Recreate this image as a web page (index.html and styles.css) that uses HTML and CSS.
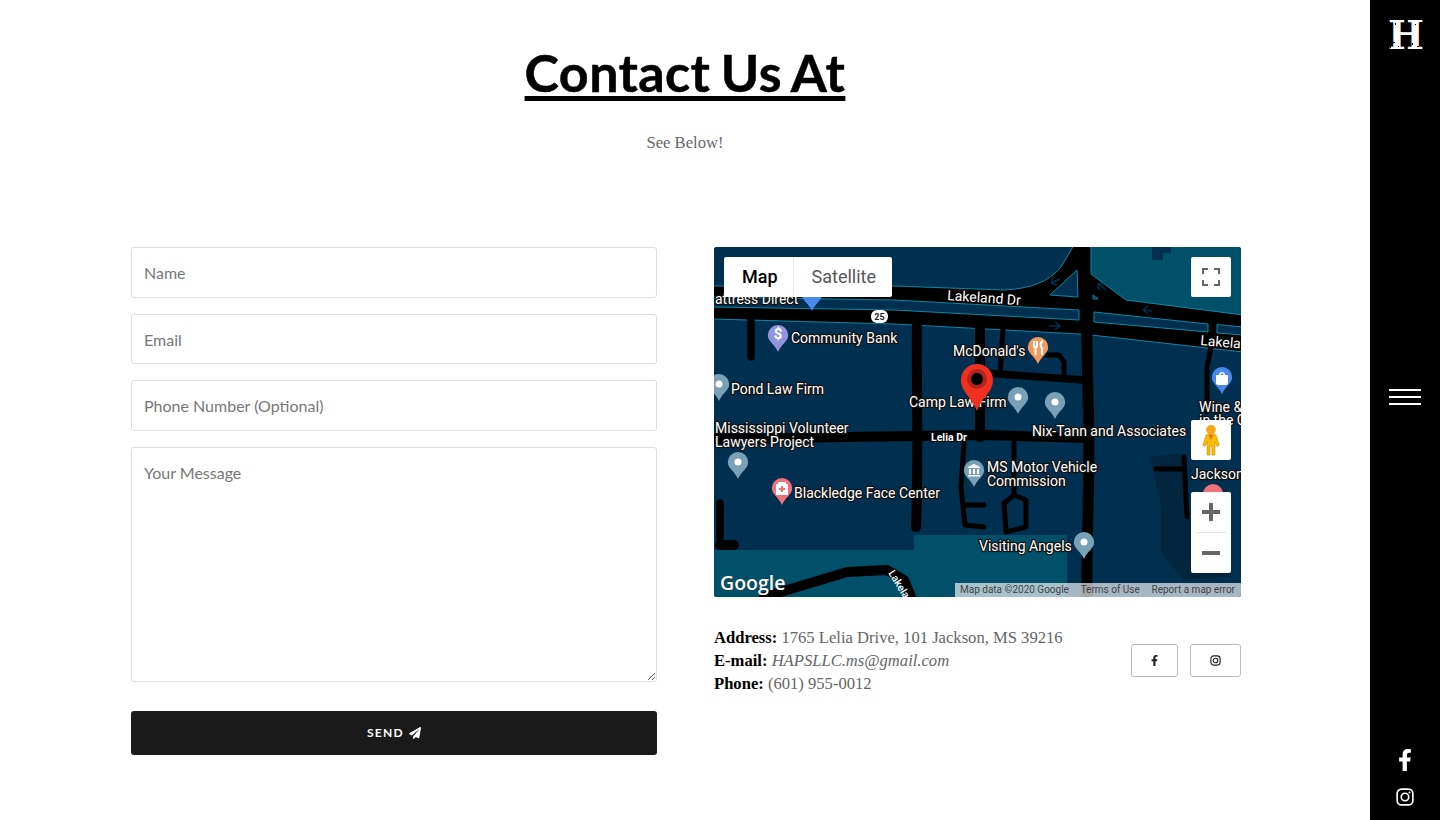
FILE: index.html
```html
<!DOCTYPE html>
<html lang="en">
<head>
<meta charset="utf-8">
<title>Contact Us</title>
<link rel="stylesheet" href="styles.css">
</head>
<body>
<div class="page">
  <main class="main">
    <header class="head">
      <h1 class="title">Contact Us At</h1>
      <p class="sub">See Below!</p>
    </header>
    <div class="columns">
      <form class="form">
        <input class="field" type="text" placeholder="Name">
        <input class="field field-low" type="text" placeholder="Email">
        <input class="field" type="text" placeholder="Phone Number (Optional)">
        <textarea class="field area" placeholder="Your Message"></textarea>
        <button class="send" type="button">SEND
          <svg class="plane" viewBox="0 0 512 512"><path d="M476 3.2L12.5 270.6c-18.1 10.4-15.8 35.6 2.2 43.2L121 358.4l287.3-253.2c5.500-4.900 13.300 2.600 8.600 8.300L176 407v80.500c0 23.600 28.500 32.900 42.500 15.800L282 426l124.600 52.200c14.200 6 30.400-2.900 33-18.200l72-432C515 7.800 493.300-6.800 476 3.200z"/></svg>
        </button>
      </form>
      <section class="right">
        <div class="map">
          <svg class="map-art" viewBox="0 0 527 350">
            <defs>
              <path id="pin" d="M0-17a10.200 10.200 0 0 1 10.200 10.200c0 6.300-7.300 9.300-10.200 16.800c-2.900-7.500-10.200-10.500-10.200-16.800a10.200 10.200 0 0 1 10.200-10.200z"/>
            </defs>
            <rect class="water" width="527" height="350"/>
            <path class="teal" d="M377 0V27L412 53L527 68V0Z"/>
            <path class="water" d="M438 0h19v6h-8v7h-11z"/>
            <path class="teal" d="M0 303H200V288H353V350H0Z"/>
            <path class="shade" d="M435 210L470 206L473 260L517 316V330L470 333L447 306V256Z"/>

            <path class="highway" d="M-2 39L180 39L290 43C315 42 335 35 347 20L360 -2H377V27L412 53L529 68V105L377 88L365 87L180 77L-2 72Z"/>
            <path class="island" d="M-2 50L180 53L365 63V73L180 63L-2 60Z"/>
            <path class="island" d="M363 23L336 48L364 50Z"/>
            <path class="island" d="M380 65L494 77V85L380 75Z"/>
            <path class="island" d="M503 77.500L529 80V88L503 86Z"/>
            <path class="island" d="M379 48L384 52H379Z"/>
            <path class="arrow" d="M346 79H335M341 75L346 79L341 83"/>
            <path class="arrow" d="M337 36L346 32M337 36L339 30M337 36L343 38"/>
            <path class="arrow" d="M392 43L384 37M384 37L385 43M384 37L390 37"/>
            <path class="arrow" d="M438 64L429 63M429 63L434 59M429 63L434 67"/>

            <g class="st-big">
              <path d="M369 -5L372 50L373 100L374 150C377 220 372 290 373 350"/>
            </g>
            <g class="st-mid">
              <path d="M203 77C202 130 205 200 202 280"/>
              <path d="M0 192L130 190L270 188L373 191"/>
              <path d="M50 350L133 325L173 323L190 333L197 350"/>
              <path d="M6 298H20"/>
              <path d="M266 80V190"/>
            </g>
            <g class="st-thin">
              <path d="M37 73V110"/>
              <path d="M6 256V292"/>
              <path d="M270 126L370 133"/>
            </g>
            <g class="st-small">
              <path d="M289 82L286 127"/>
              <path d="M333 108H345L350 115V130"/>
              <path d="M498 95L493 120V165"/>
              <path d="M250 196L247 240L251 278L270 280"/>
              <path d="M250 258H270"/>
              <path d="M300 196V248"/>
              <path d="M290 256L300 248L312 253V280L292 285Z"/>
              <path d="M442 222H470M470 210L473 270"/>
            </g>

            <use class="p-blue" href="#pin" x="98" y="54"/>
            <use class="p-purple" href="#pin" x="64" y="95"/>
            <use class="p-grey" href="#pin" x="5" y="144"/>
            <use class="p-orange" href="#pin" x="324" y="107"/>
            <use class="p-grey" href="#pin" x="304" y="157"/>
            <use class="p-grey" href="#pin" x="341" y="162"/>
            <use class="p-blue" href="#pin" x="508" y="137"/>
            <use class="p-grey" href="#pin" x="24" y="222"/>
            <use class="p-rose" href="#pin" x="68" y="248"/>
            <use class="p-grey" href="#pin" x="260" y="230"/>
            <use class="p-grey" href="#pin" x="370" y="302"/>
            <use class="p-rose" href="#pin" x="499" y="254"/>

            <circle class="dot" cx="5" cy="137" r="3.500"/>
            <circle class="dot" cx="304" cy="150" r="3.500"/>
            <circle class="dot" cx="341" cy="155" r="3.500"/>
            <circle class="dot" cx="24" cy="215" r="3.500"/>
            <circle class="dot" cx="370" cy="295" r="3.500"/>

            <text class="glyph" x="64" y="92">$</text>
            <path class="icon-line" d="M320 94v5c0 2 3 2 3 0v-5M321.500 99v9M329 94c-3 1-3 6-1 7v7"/>
            <path class="dot" d="M502 128h12v8c0 1-1 2-2 2h-8c-1 0-2-1-2-2zM505 128c0-4 6-4 6 0h-1.500c0-2-3-2-3 0z"/>
            <path class="dot" d="M62 237h12v11h-12zM64 235h8v2h-8z"/>
            <path class="p-rose" d="M67 239h2v2h2v2h-2v2h-2v-2h-2v-2h2z"/>
            <path class="dot" d="M260 217l6 3v1h-12v-1zM255 222h2v5h-2zM259 222h2v5h-2zM263 222h2v5h-2zM254 228h12v1.500h-12z"/>

            <g class="road-label">
              <text x="233" y="53" transform="rotate(4 233 53)">Lakeland Dr</text>
              <text x="486" y="98" transform="rotate(5 486 98)">Lakela</text>
            </g>
            <g class="label">
              <text x="1" y="57">attress Direct</text>
              <text x="77" y="96">Community Bank</text>
              <text x="239" y="109">McDonald's</text>
              <text x="17" y="147">Pond Law Firm</text>
              <text x="195" y="160">Camp Law Firm</text>
              <text x="1" y="186">Mississippi Volunteer</text>
              <text x="1" y="200">Lawyers Project</text>
              <text x="318" y="189">Nix-Tann and Associates</text>
              <text x="485" y="165">Wine &amp;</text>
              <text x="485" y="178">in the C</text>
              <text x="273" y="225">MS Motor Vehicle</text>
              <text x="273" y="239">Commission</text>
              <text x="80" y="251">Blackledge Face Center</text>
              <text x="477" y="232">Jackson</text>
              <text x="265" y="304">Visiting Angels</text>
            </g>
            <text class="small-road" x="217" y="194">Lelia Dr</text>
            <text class="small-curve" x="174" y="326" transform="rotate(58 174 326)">Lakela</text>
            <rect class="shield" x="157" y="63" width="17" height="13" rx="6"/>
            <text class="shield-text" x="165.500" y="73">25</text>

            <path class="m-main" d="M263 117C254 117 247 124 247 133C247 145 258 150 263 164C268 150 279 145 279 133C279 124 272 117 263 117Z"/>
            <circle class="m-ring" cx="263" cy="132" r="10"/>
            <circle class="m-dot" cx="263" cy="132" r="6"/>

            <text class="google" x="6" y="343">Google</text>
          </svg>

          <div class="map-type">
            <span class="mt mt-on">Map</span>
            <span class="mt">Satellite</span>
          </div>
          <button class="ctl full" type="button" aria-label="Fullscreen">
            <svg class="ctl-icon" viewBox="0 0 18 18"><path d="M0 6V0H6V2H2V6ZM12 0H18V6H16V2H12ZM18 12V18H12V16H16V12ZM6 18H0V12H2V16H6Z"/></svg>
          </button>
          <button class="ctl peg" type="button" aria-label="Street View">
            <svg class="peg-icon" viewBox="0 0 18 32">
              <circle class="peg-a" cx="9" cy="5" r="5"/>
              <path class="peg-b" d="M4 10H14L17.500 21L15 22L13 17V31H10V22H8V31H5V17L3 22L.5 21Z"/>
              <path class="peg-c" d="M6 10L9 15L12 10Z"/>
            </svg>
          </button>
          <div class="zoomer">
            <button class="zb" type="button" aria-label="Zoom in"><svg class="ctl-icon" viewBox="0 0 18 18"><path d="M7 0H11V7H18V11H11V18H7V11H0V7H7Z"/></svg></button>
            <span class="zsep"></span>
            <button class="zb" type="button" aria-label="Zoom out"><svg class="ctl-icon" viewBox="0 0 18 18"><path d="M0 7H18V11H0Z"/></svg></button>
          </div>
          <div class="attrib">
            <span>Map data ©2020 Google</span><span>Terms of Use</span><span>Report a map error</span>
          </div>
        </div>
        <div class="info">
          <div class="lines">
            <div><b class="key">Address:</b> 1765 Lelia Drive, 101 Jackson, MS 39216</div>
            <div><b class="key">E-mail:</b> <em>HAPSLLC.ms@gmail.com</em></div>
            <div><b class="key">Phone:</b> (601) 955-0012</div>
          </div>
          <div class="socials">
            <a class="soc soc-f" href="#" aria-label="Facebook"><svg class="soc-ic" viewBox="0 0 320 512"><path d="M279.140 288l14.220-92.660h-88.910v-60.130c0-25.350 12.420-50.060 52.240-50.060h40.420V6.260S260.430 0 225.360 0c-73.220 0-121.080 44.380-121.080 124.720v70.620H22.890V288h81.390v224h100.170V288z"/></svg></a>
            <a class="soc soc-i" href="#" aria-label="Instagram"><svg class="soc-ig" viewBox="0 0 24 24"><rect x="2" y="2" width="20" height="20" rx="6"/><circle cx="12" cy="12" r="5"/><circle class="soc-dot" cx="17.500" cy="6.500" r="1"/></svg></a>
          </div>
        </div>
      </section>
    </div>
  </main>
  <aside class="side">
    <svg class="logo" viewBox="0 0 40 34">
      <text class="logo-h" x="3" y="31" textLength="36" lengthAdjust="spacingAndGlyphs">H</text>
      <path class="logo-wear" d="M8 24h2v1h-2zM27 25h1v2h-1zM35 4h2v1h-2zM10 5h1v2h-1zM5 29h1v1h-1zM30 6h1v1h-1zM13 28h1v1h-1zM32 28h2v1h-2z"/>
    </svg>
    <button class="burger" type="button" aria-label="Menu"><span></span><span></span><span></span></button>
    <div class="side-soc">
      <svg class="side-f" viewBox="0 0 320 512"><path d="M279.140 288l14.220-92.660h-88.910v-60.130c0-25.350 12.420-50.060 52.240-50.060h40.420V6.260S260.430 0 225.360 0c-73.220 0-121.080 44.380-121.080 124.720v70.620H22.890V288h81.390v224h100.170V288z"/></svg>
      <svg class="side-i" viewBox="0 0 24 24"><rect x="1.500" y="1.500" width="21" height="21" rx="6"/><circle cx="12" cy="12" r="5"/><circle class="soc-dot" cx="18" cy="6" r="1.300"/></svg>
    </div>
  </aside>
</div>
</body>
</html>
```

FILE: styles.css
```css
* { box-sizing: border-box; }
html, body { margin: 0; height: 100%; background: #fff; }
body { font-family: "Liberation Serif", serif; overflow: hidden; }
.page { display: flex; height: 820px; }
.main { flex: 1; min-width: 0; display: flex; flex-direction: column; align-items: center; }
.head { text-align: center; padding-top: 40px; }
.title { margin: 0; font: 700 52px/64px Lato, sans-serif; color: #000; letter-spacing: .4px; word-spacing: -2.500px; -webkit-text-stroke: .5px #000; text-decoration: underline; text-decoration-thickness: 5px; text-underline-offset: 4px; }
.sub { margin: 27px 0 0; font-size: 16.600px; line-height: 24px; color: #666; }
.columns { display: flex; gap: 57px; width: 1110px; margin: 92px 0 0 2px; }
.form { width: 526px; display: flex; flex-direction: column; gap: 16px; flex: none; }
.field { display: block; width: 100%; height: 50.600px; border: 1px solid #ddd; border-radius: 3px; padding: 0 12px; font: 400 16px/24px Lato, sans-serif; color: #333; background: #fff; outline: none; }
.field-low { padding-top: 2px; }
.field::placeholder { color: #777; opacity: 1; }
.area { height: 235.200px; padding-top: 13px; resize: vertical; }
.send { height: 44px; margin-top: 13px; border: 0; border-radius: 3px; background: #1a1a1a; color: #fff; font: 700 12px/44px Lato, sans-serif; letter-spacing: 1.300px; display: flex; justify-content: center; align-items: center; gap: 5px; padding: 0; }
.plane { width: 12px; height: 12px; fill: #fff; }
.right { width: 527px; flex: none; }
.map { position: relative; width: 527px; height: 350px; border-radius: 3px; overflow: hidden; background: #012f50; }
.map-art { display: block; width: 527px; height: 350px; }
.water { fill: #012f50; }
.teal { fill: #00506a; }
.shade { fill: #03263f; }
.highway { fill: #000; stroke: #0c87a3; stroke-width: 1; }
.island { fill: #012f50; stroke: #0c87a3; stroke-width: 1; }
.arrow { fill: none; stroke: #012f50; stroke-width: 1.500; }
.st-big path, .st-mid path, .st-thin path, .st-small path { fill: none; stroke: #000; stroke-linecap: round; stroke-linejoin: round; }
.st-big path { stroke-width: 11; }
.st-mid path { stroke-width: 10; }
.st-thin path { stroke-width: 7.500; }
.st-small path { stroke-width: 5; }
.p-blue { fill: #4a89ec; }
.p-purple { fill: #9293dc; }
.p-grey { fill: #78a0b6; }
.p-orange { fill: #f19a5e; }
.p-rose { fill: #f0707c; }
.dot { fill: #fff; }
.glyph { fill: #fff; font: 700 15px Roboto, sans-serif; text-anchor: middle; }
.icon-line { fill: none; stroke: #fff; stroke-width: 2; }
.label text, .road-label text { font: 400 14px Roboto, sans-serif; fill: #fff; stroke: #111; stroke-width: 2.500px; paint-order: stroke; stroke-linejoin: round; }
.road-label text { stroke: #000; }
.small-road { font: 700 10.500px Roboto, sans-serif; fill: #fff; stroke: #000; stroke-width: 2px; paint-order: stroke; }
.small-curve { font: 500 10.500px Roboto, sans-serif; fill: #fff; }
.shield { fill: #fff; }
.shield-text { font: 700 9px Roboto, sans-serif; fill: #222; text-anchor: middle; }
.m-main { fill: #f0301f; }
.m-ring { fill: #b3231b; }
.m-dot { fill: #000; }
.google { font: 600 19.500px "Open Sans", sans-serif; fill: #fff; stroke: #222; stroke-width: .5px; paint-order: stroke; }
.map-type { position: absolute; left: 10px; top: 10px; display: flex; height: 40px; background: #fff; border-radius: 2px; font: 400 18px/40px Roboto, sans-serif; }
.mt { padding: 0 16px 0 18px; color: #565656; }
.mt-on { color: #000; font-weight: 500; border-right: 1px solid #e6e6e6; padding-right: 15px; }
.ctl { position: absolute; right: 10px; width: 40px; height: 40px; border: 0; padding: 0; background: #fff; border-radius: 2px; display: flex; align-items: center; justify-content: center; }
.full { top: 10px; }
.peg { top: 173px; }
.ctl-icon { width: 18px; height: 18px; fill: #666; }
.peg-icon { width: 18px; height: 31px; }
.peg-a { fill: #f6a814; }
.peg-b { fill: #fbbc04; stroke: #c98a00; stroke-width: .6; }
.peg-c { fill: #e37400; }
.zoomer { position: absolute; right: 10px; top: 245px; width: 40px; height: 81px; background: #fff; border-radius: 2px; display: flex; flex-direction: column; align-items: center; }
.zb { width: 40px; height: 40px; border: 0; padding: 0; background: none; display: flex; align-items: center; justify-content: center; }
.zsep { width: 30px; height: 1px; background: #e6e6e6; flex: none; }
.attrib { position: absolute; right: 0; bottom: 0; height: 14px; width: 286px; background: rgba(255,255,255,.65); font: 400 10px/14px Roboto, sans-serif; color: #444; display: flex; justify-content: space-between; padding: 0 6px 0 5px; }
.info { display: flex; justify-content: space-between; align-items: center; margin-top: 29px; }
.lines { font-size: 16.600px; line-height: 23px; color: #666; }
.key { color: #000; font-weight: 700; }
.socials { display: flex; gap: 12px; }
.soc { height: 33px; border: 1px solid #bbb; border-radius: 3px; display: flex; align-items: center; justify-content: center; background: #fff; }
.soc-f { width: 47px; }
.soc-i { width: 51px; }
.soc-ic { width: 7px; height: 11px; fill: #222; }
.soc-ig { width: 11px; height: 11px; fill: none; stroke: #222; stroke-width: 2.400; }
.soc-dot { fill: #fff; stroke: none; }
.soc-ig .soc-dot { fill: #222; }
.side { width: 70px; flex: none; background: #000; display: flex; flex-direction: column; align-items: center; }
.logo { display: block; flex: none; margin-top: 18px; width: 40px; height: 34px; }
.logo-h { font: 700 40px "DejaVu Serif", serif; fill: #fff; }
.logo-wear { fill: #000; }
.burger { margin-top: 337px; width: 32px; height: 16px; background: none; border: 0; padding: 0; display: flex; flex-direction: column; justify-content: space-between; }
.burger span { display: block; height: 2px; background: #fff; }
.side-soc { margin-top: auto; padding-bottom: 14px; display: flex; flex-direction: column; align-items: center; gap: 17px; }
.side-f { width: 14px; height: 22px; fill: #fff; }
.side-i { width: 18px; height: 18px; fill: none; stroke: #fff; stroke-width: 2.200; }
.side-i .soc-dot { fill: #fff; }
```
